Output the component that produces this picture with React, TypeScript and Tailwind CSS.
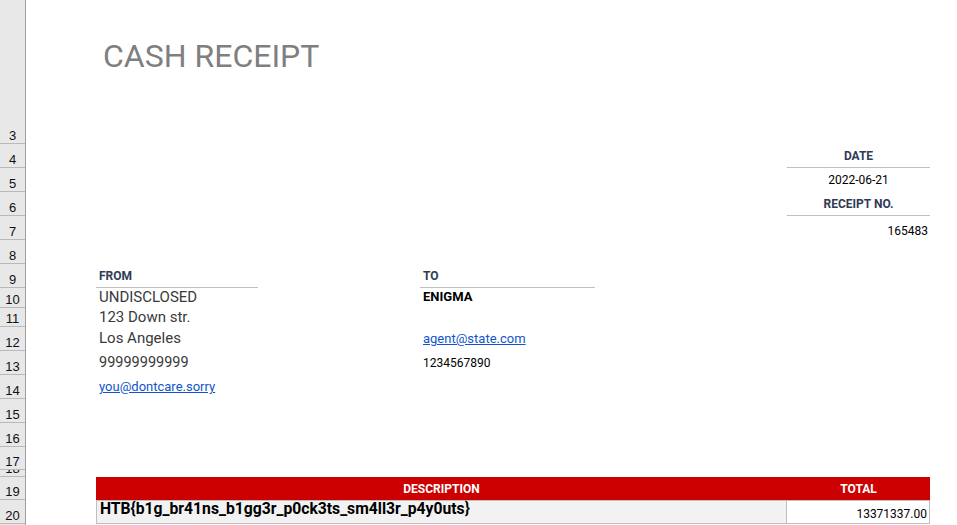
import React from "react";

const rows: { n: string; h: string }[] = [
  { n: "3", h: "h-[144px]" },
  { n: "4", h: "h-[24px]" },
  { n: "5", h: "h-[24px]" },
  { n: "6", h: "h-[24px]" },
  { n: "7", h: "h-[24px]" },
  { n: "8", h: "h-[24px]" },
  { n: "9", h: "h-[24px]" },
  { n: "10", h: "h-[20px]" },
  { n: "11", h: "h-[19px]" },
  { n: "12", h: "h-[24px]" },
  { n: "13", h: "h-[24px]" },
  { n: "14", h: "h-[24px]" },
  { n: "15", h: "h-[24px]" },
  { n: "16", h: "h-[24px]" },
  { n: "17", h: "h-[23px]" },
  { n: "18", h: "h-[7px]" },
  { n: "19", h: "h-[23px]" },
  { n: "20", h: "h-[24px]" },
  { n: "", h: "h-[24px]" },
];

const label = "text-[12px] leading-[14px] font-bold text-[#2f3b55]";

export default function App() {
  return (
    <div className="flex w-[957px] h-[525px] overflow-hidden bg-white font-['Roboto',sans-serif]">
      {/* Row headers */}
      <div className="w-[26px] shrink-0 bg-[#e8e8e8] border-r border-[#a0a0a0] flex flex-col font-['Liberation_Sans',Arial,sans-serif]">
        {rows.map((r, i) => (
          <div
            key={i}
            className={`${r.h} shrink-0 border-b border-[#b9b9b9] flex items-end justify-center pb-[1px] overflow-hidden text-[13px] leading-[13px] text-[#111111]`}
          >
            {r.n}
          </div>
        ))}
      </div>

      {/* Sheet content */}
      <div className="flex-1 flex flex-col">
        {/* Row 3 (title) */}
        <div className="h-[144px] shrink-0 pt-[40px] pl-[77px]">
          <div className="text-[32px] leading-[32px] text-[#7f7f7f]">CASH RECEIPT</div>
        </div>

        {/* Row 4 */}
        <div className="h-[24px] shrink-0 flex">
          <div className="w-[761px] shrink-0" />
          <div className={`w-[143px] shrink-0 border-b border-[#bfbfbf] flex items-end justify-center pb-[4px] ${label}`}>
            DATE
          </div>
        </div>
        {/* Row 5 */}
        <div className="h-[24px] shrink-0 flex">
          <div className="w-[761px] shrink-0" />
          <div className="w-[143px] shrink-0 flex items-end justify-center pb-[5px] text-[12px] leading-[14px] text-black">
            2022-06-21
          </div>
        </div>
        {/* Row 6 */}
        <div className="h-[24px] shrink-0 flex">
          <div className="w-[761px] shrink-0" />
          <div className={`w-[143px] shrink-0 border-b border-[#bfbfbf] flex items-end justify-center pb-[4px] ${label}`}>
            RECEIPT NO.
          </div>
        </div>
        {/* Row 7 */}
        <div className="h-[24px] shrink-0 flex">
          <div className="w-[761px] shrink-0" />
          <div className="w-[143px] shrink-0 flex items-end justify-end pr-[2px] pb-[2px] text-[12px] leading-[14px] text-black">
            165483
          </div>
        </div>
        {/* Row 8 */}
        <div className="h-[24px] shrink-0" />

        {/* Row 9 */}
        <div className="h-[24px] shrink-0 flex">
          <div className="w-[70px] shrink-0" />
          <div className={`w-[162px] shrink-0 border-b border-[#bfbfbf] flex items-end pl-[3px] pb-[4px] ${label}`}>
            FROM
          </div>
          <div className="w-[162px] shrink-0" />
          <div className={`w-[175px] shrink-0 border-b border-[#bfbfbf] flex items-end pl-[3px] pb-[4px] ${label}`}>
            TO
          </div>
        </div>

        {/* Row 10 */}
        <div className="h-[20px] shrink-0 flex">
          <div className="w-[70px] shrink-0" />
          <div className="w-[162px] shrink-0 flex items-end pl-[3px] pb-[2px] text-[15px] leading-[18px] text-[#3a3a3a]">
            UNDISCLOSED
          </div>
          <div className="w-[162px] shrink-0" />
          <div className="w-[175px] shrink-0 flex items-end pl-[3px] pb-[4px] text-[13px] leading-[15px] font-bold text-black">
            ENIGMA
          </div>
        </div>

        {/* Row 11 */}
        <div className="h-[19px] shrink-0 flex">
          <div className="w-[70px] shrink-0" />
          <div className="w-[162px] shrink-0 flex items-end pl-[3px] pb-[1px] text-[15px] leading-[18px] text-[#3a3a3a]">
            123 Down str.
          </div>
        </div>

        {/* Row 12 */}
        <div className="h-[24px] shrink-0 flex">
          <div className="w-[70px] shrink-0" />
          <div className="w-[162px] shrink-0 flex items-end pl-[3px] pb-[4px] text-[15px] leading-[18px] text-[#3a3a3a]">
            Los Angeles
          </div>
          <div className="w-[162px] shrink-0" />
          <div className="w-[175px] shrink-0 flex items-end pl-[3px] pb-[5px] text-[13px] leading-[15px]">
            <span className="text-[#1155cc] underline">agent@state.com</span>
          </div>
        </div>

        {/* Row 13 */}
        <div className="h-[24px] shrink-0 flex">
          <div className="w-[70px] shrink-0" />
          <div className="w-[162px] shrink-0 flex items-end pl-[3px] pb-[3px] text-[14.5px] leading-[18px] text-[#3a3a3a]">
            99999999999
          </div>
          <div className="w-[162px] shrink-0" />
          <div className="w-[175px] shrink-0 flex items-end pl-[3px] pb-[5px] text-[12px] leading-[14px] text-black">
            1234567890
          </div>
        </div>

        {/* Row 14 */}
        <div className="h-[24px] shrink-0 flex">
          <div className="w-[70px] shrink-0" />
          <div className="w-[162px] shrink-0 flex items-end pl-[3px] pb-[5px] text-[13px] leading-[15px]">
            <span className="text-[#1155cc] underline">you@dontcare.sorry</span>
          </div>
        </div>

        {/* Rows 15-18 */}
        <div className="h-[24px] shrink-0" />
        <div className="h-[24px] shrink-0" />
        <div className="h-[23px] shrink-0" />
        <div className="h-[7px] shrink-0" />

        {/* Row 19 */}
        <div className="h-[23px] shrink-0 flex">
          <div className="w-[70px] shrink-0" />
          <div className="w-[691px] shrink-0 bg-[#cc0000] flex items-center justify-center text-[12px] leading-[14px] font-bold text-white">
            DESCRIPTION
          </div>
          <div className="w-[143px] shrink-0 bg-[#cc0000] flex items-center justify-center text-[12px] leading-[14px] font-bold text-white">
            TOTAL
          </div>
        </div>

        {/* Row 20 */}
        <div className="h-[24px] shrink-0 flex">
          <div className="w-[70px] shrink-0" />
          <div className="w-[691px] shrink-0 bg-[#f2f2f2] border border-[#bfbfbf] flex items-start pl-[3px] text-[15.7px] leading-[16px] font-bold text-black">
            {"HTB{b1g_br41ns_b1gg3r_p0ck3ts_sm4ll3r_p4y0uts}"}
          </div>
          <div className="w-[143px] shrink-0 bg-white border-y border-r border-[#bfbfbf] flex items-end justify-end pr-[2px] pb-[2px] text-[12px] leading-[14px] text-black">
            13371337.00
          </div>
        </div>
      </div>
    </div>
  );
}
